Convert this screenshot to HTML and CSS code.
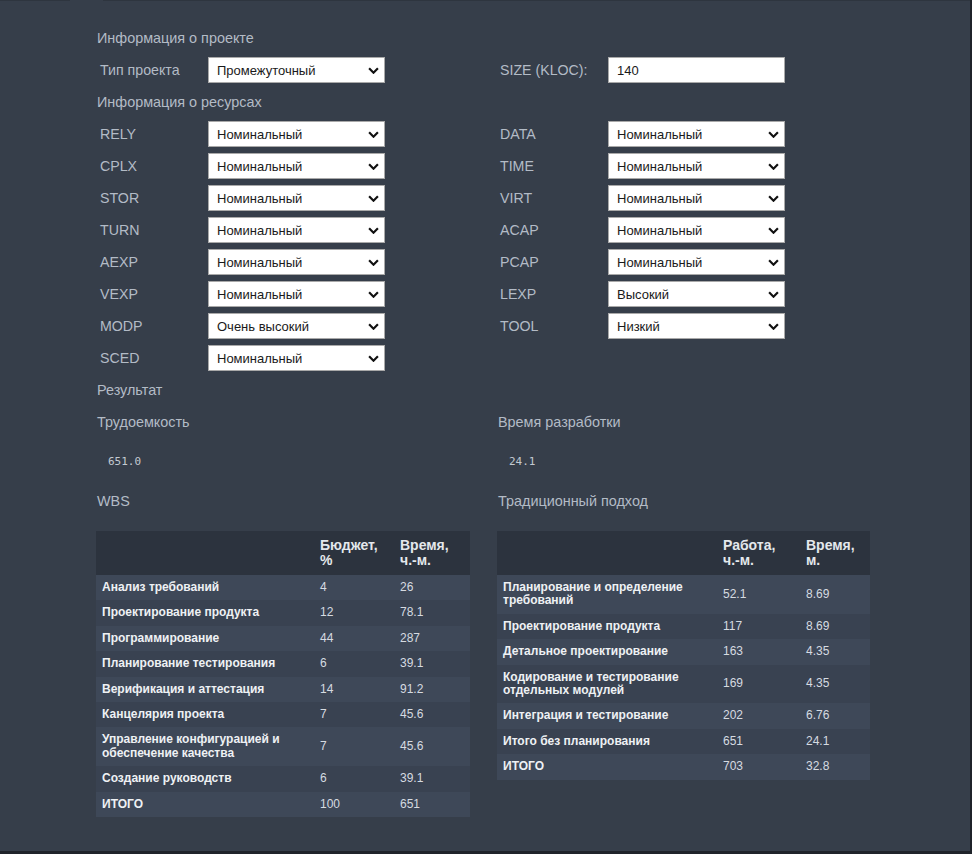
FILE: index.html
```html
<!DOCTYPE html>
<html lang="ru">
<head>
<meta charset="utf-8">
<link rel="stylesheet" href="styles.css">
</head>
<body>
<div class="app">
  <div class="topline"><span class="seg seg-a"></span><span class="seg seg-gap"></span><span class="seg seg-b"></span></div>
  <main class="content">
    <div class="line"><div class="heading">Информация о проекте</div></div>
    <div class="grid2">
      <div class="field"><span class="label">Тип проекта</span><div class="select"><span>Промежуточный</span><svg class="chev" viewBox="0 0 10 6"><path d="M1 1l4 4 4-4"/></svg></div></div>
      <div class="field"><span class="label">SIZE (KLOC):</span><div class="input">140</div></div>
    </div>
    <div class="line"><div class="heading">Информация о ресурсах</div></div>
    <div class="grid2">
      <div class="field"><span class="label">RELY</span><div class="select"><span>Номинальный</span><svg class="chev" viewBox="0 0 10 6"><path d="M1 1l4 4 4-4"/></svg></div></div>
      <div class="field"><span class="label">DATA</span><div class="select"><span>Номинальный</span><svg class="chev" viewBox="0 0 10 6"><path d="M1 1l4 4 4-4"/></svg></div></div>
    </div>
    <div class="grid2">
      <div class="field"><span class="label">CPLX</span><div class="select"><span>Номинальный</span><svg class="chev" viewBox="0 0 10 6"><path d="M1 1l4 4 4-4"/></svg></div></div>
      <div class="field"><span class="label">TIME</span><div class="select"><span>Номинальный</span><svg class="chev" viewBox="0 0 10 6"><path d="M1 1l4 4 4-4"/></svg></div></div>
    </div>
    <div class="grid2">
      <div class="field"><span class="label">STOR</span><div class="select"><span>Номинальный</span><svg class="chev" viewBox="0 0 10 6"><path d="M1 1l4 4 4-4"/></svg></div></div>
      <div class="field"><span class="label">VIRT</span><div class="select"><span>Номинальный</span><svg class="chev" viewBox="0 0 10 6"><path d="M1 1l4 4 4-4"/></svg></div></div>
    </div>
    <div class="grid2">
      <div class="field"><span class="label">TURN</span><div class="select"><span>Номинальный</span><svg class="chev" viewBox="0 0 10 6"><path d="M1 1l4 4 4-4"/></svg></div></div>
      <div class="field"><span class="label">ACAP</span><div class="select"><span>Номинальный</span><svg class="chev" viewBox="0 0 10 6"><path d="M1 1l4 4 4-4"/></svg></div></div>
    </div>
    <div class="grid2">
      <div class="field"><span class="label">AEXP</span><div class="select"><span>Номинальный</span><svg class="chev" viewBox="0 0 10 6"><path d="M1 1l4 4 4-4"/></svg></div></div>
      <div class="field"><span class="label">PCAP</span><div class="select"><span>Номинальный</span><svg class="chev" viewBox="0 0 10 6"><path d="M1 1l4 4 4-4"/></svg></div></div>
    </div>
    <div class="grid2">
      <div class="field"><span class="label">VEXP</span><div class="select"><span>Номинальный</span><svg class="chev" viewBox="0 0 10 6"><path d="M1 1l4 4 4-4"/></svg></div></div>
      <div class="field"><span class="label">LEXP</span><div class="select"><span>Высокий</span><svg class="chev" viewBox="0 0 10 6"><path d="M1 1l4 4 4-4"/></svg></div></div>
    </div>
    <div class="grid2">
      <div class="field"><span class="label">MODP</span><div class="select"><span>Очень высокий</span><svg class="chev" viewBox="0 0 10 6"><path d="M1 1l4 4 4-4"/></svg></div></div>
      <div class="field"><span class="label">TOOL</span><div class="select"><span>Низкий</span><svg class="chev" viewBox="0 0 10 6"><path d="M1 1l4 4 4-4"/></svg></div></div>
    </div>
    <div class="grid2">
      <div class="field"><span class="label">SCED</span><div class="select"><span>Номинальный</span><svg class="chev" viewBox="0 0 10 6"><path d="M1 1l4 4 4-4"/></svg></div></div>
      <div class="field"></div>
    </div>
    <div class="line"><div class="heading">Результат</div></div>
    <div class="grid2">
      <div class="result">
        <div class="line"><div class="heading">Трудоемкость</div></div>
        <pre class="value">651.0</pre>
        <div class="line"><div class="heading">WBS</div></div>
        <table class="tbl tbl-wbs">
          <thead><tr><th></th><th>Бюджет,<br>%</th><th>Время,<br>ч.-м.</th></tr></thead>
          <tbody>
            <tr><td>Анализ требований</td><td>4</td><td>26</td></tr>
            <tr><td>Проектирование продукта</td><td>12</td><td>78.1</td></tr>
            <tr><td>Программирование</td><td>44</td><td>287</td></tr>
            <tr><td>Планирование тестирования</td><td>6</td><td>39.1</td></tr>
            <tr><td>Верификация и аттестация</td><td>14</td><td>91.2</td></tr>
            <tr><td>Канцелярия проекта</td><td>7</td><td>45.6</td></tr>
            <tr><td>Управление конфигурацией и обеспечение качества</td><td>7</td><td>45.6</td></tr>
            <tr><td>Создание руководств</td><td>6</td><td>39.1</td></tr>
            <tr><td>ИТОГО</td><td>100</td><td>651</td></tr>
          </tbody>
        </table>
      </div>
      <div class="result">
        <div class="line"><div class="heading">Время разработки</div></div>
        <pre class="value">24.1</pre>
        <div class="line"><div class="heading">Традиционный подход</div></div>
        <table class="tbl tbl-trad">
          <thead><tr><th></th><th>Работа,<br>ч.-м.</th><th>Время,<br>м.</th></tr></thead>
          <tbody>
            <tr><td>Планирование и определение требований</td><td>52.1</td><td>8.69</td></tr>
            <tr><td>Проектирование продукта</td><td>117</td><td>8.69</td></tr>
            <tr><td>Детальное проектирование</td><td>163</td><td>4.35</td></tr>
            <tr><td>Кодирование и тестирование отдельных модулей</td><td>169</td><td>4.35</td></tr>
            <tr><td>Интеграция и тестирование</td><td>202</td><td>6.76</td></tr>
            <tr><td>Итого без планирования</td><td>651</td><td>24.1</td></tr>
            <tr><td>ИТОГО</td><td>703</td><td>32.8</td></tr>
          </tbody>
        </table>
      </div>
    </div>
  </main>
</div>
</body>
</html>
```
FILE: styles.css
```css
html, body {
  margin: 0;
  padding: 0;
  background: #1f232a;
}
body {
  font-family: "Liberation Sans", Arial, sans-serif;
  width: 972px;
  height: 854px;
  overflow: hidden;
}
.app {
  width: 970px;
  height: 851px;
  background: #363e4a;
  overflow: hidden;
}
.topline {
  display: flex;
  height: 1px;
}
.seg { display: block; height: 1px; }
.seg-a { width: 70px; background: #2e353f; }
.seg-gap { width: 33px; background: #363e4a; }
.seg-b { flex: 1; background: #2e353f; }
.content {
  padding: 21px 0 0 96px;
  width: 774px;
}
.line {
  height: 32px;
  display: flex;
  align-items: center;
}
.heading {
  font-size: 14.4px;
  color: #b3bbc6;
  padding-left: 1px;
}
.grid2 {
  display: grid;
  grid-template-columns: 374px 373px;
  column-gap: 27px;
}
.field {
  height: 32px;
  display: flex;
  align-items: center;
}
.label {
  width: 108px;
  padding-left: 4px;
  font-size: 14.2px;
  color: #b3bbc6;
}
.grid2 > .field:nth-child(2) .label {
  padding-left: 3px;
  width: 108px;
}
.select, .input {
  height: 24px;
  background: #ffffff;
  border: 1px solid #a9a9a9;
  display: flex;
  align-items: center;
  justify-content: space-between;
  padding: 0 0 0 8px;
  box-sizing: content-box;
  font-size: 13px;
  color: #1a1a1a;
  width: 167px;
}
.chev {
  width: 11px;
  height: 7px;
  margin-right: 5px;
  fill: none;
  stroke: #111;
  stroke-width: 2;
}
.result {
  display: flex;
  flex-direction: column;
}
.value {
  margin: 0;
  height: 47px;
  display: flex;
  align-items: center;
  padding-left: 12px;
  font-family: "DejaVu Sans Mono", monospace;
  font-size: 11px;
  color: #c3c9d1;
}
.tbl {
  margin-top: 14px;
  border-collapse: collapse;
  font-size: 12px;
  color: #dfe3e8;
}
.tbl-wbs { width: 374px; }
.tbl-trad { width: 373px; }
.tbl th {
  background: #2c333e;
  font-size: 14px;
  font-weight: bold;
  text-align: left;
  line-height: 15px;
  padding: 7px 6px 7px 6px;
  height: 30px;
  color: #e4e8ec;
}
.tbl td {
  padding: 6px 6px;
  line-height: 13.4px;
  text-align: left;
  vertical-align: middle;
  color: #d6dbe1;
}
.tbl td:first-child {
  font-weight: bold;
  color: #eef1f4;
}
.tbl tbody tr:nth-child(odd) { background: #3e4858; }
.tbl tbody tr:nth-child(even) { background: #394251; }
.tbl-wbs th:nth-child(1), .tbl-wbs td:nth-child(1) { width: 206px; }
.tbl-wbs th:nth-child(2), .tbl-wbs td:nth-child(2) { width: 68px; }
.tbl-trad th:nth-child(1), .tbl-trad td:nth-child(1) { width: 208px; }
.tbl-trad th:nth-child(2), .tbl-trad td:nth-child(2) { width: 71px; }
```
